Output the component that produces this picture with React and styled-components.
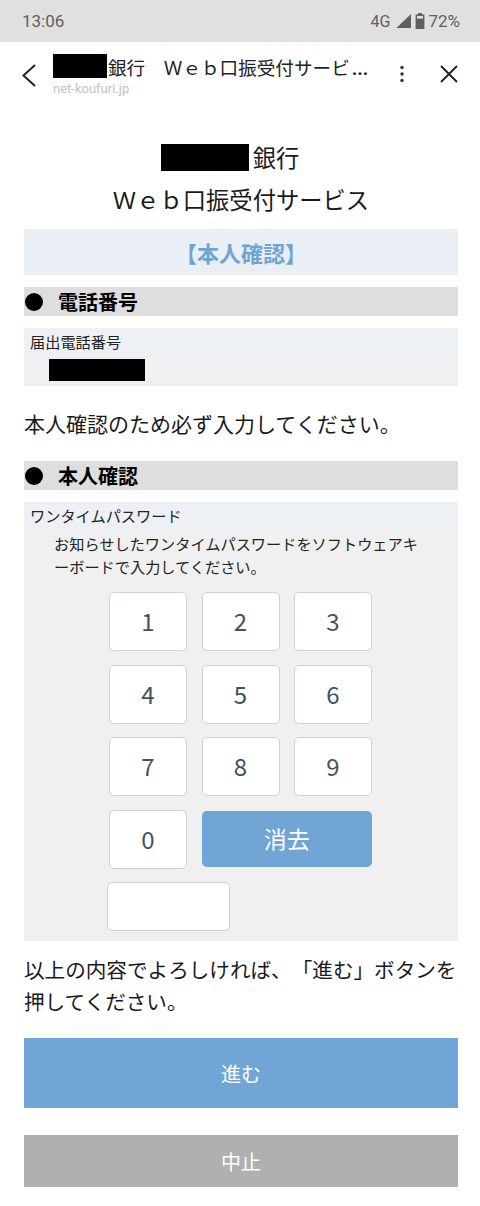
import React from 'react'
import styled, { createGlobalStyle } from 'styled-components';

const keys = ['1', '2', '3', '4', '5', '6', '7', '8', '9'];

function App() {
  return (
    <>
      <GlobalStyle />
      <Page>
        <StatusBar>
          <Time>13:06</Time>
          <StatusRight>
            <Network>4G</Network>
            <svg width="16" height="14" viewBox="0 0 16 14">
              <path d="M15 0V14H0.5Z" fill="#5f5f5f" />
            </svg>
            <svg width="10" height="16" viewBox="0 0 10 16">
              <path d="M3 0H7V1.6H9.4V16H0.6V1.6H3Z" fill="#5f5f5f" />
              <rect x="2" y="3" width="6" height="2.6" fill="#e0e0e0" />
            </svg>
            <Battery>72%</Battery>
          </StatusRight>
        </StatusBar>
        <NavBar>
          <IconSlot>
            <svg width="16" height="24" viewBox="0 0 16 24">
              <path d="M14 2L2.5 12.5L14 23" fill="none" stroke="#222" strokeWidth="2" />
            </svg>
          </IconSlot>
          <NavTitleBox>
            <NavTitle><NavBlock />銀行　Ｗｅｂ口振受付サービ<NavMore>...</NavMore></NavTitle>
            <NavUrl>net-koufuri.jp</NavUrl>
          </NavTitleBox>
          <NavDots>
            <svg width="6" height="18" viewBox="0 0 6 18">
              <circle cx="3" cy="2.5" r="1.7" fill="#333" />
              <circle cx="3" cy="9" r="1.7" fill="#333" />
              <circle cx="3" cy="15.5" r="1.7" fill="#333" />
            </svg>
          </NavDots>
          <NavClose>
            <svg width="20" height="20" viewBox="0 0 20 20">
              <path d="M2 2L18 18M18 2L2 18" fill="none" stroke="#222" strokeWidth="1.9" />
            </svg>
          </NavClose>
        </NavBar>
        <Content>
          <Heading>
            <HeadLine><HeadBlock />銀行</HeadLine>
            Ｗｅｂ口振受付サービス
          </Heading>
          <Banner>【本人確認】</Banner>
          <SectionBar><Dot />電話番号</SectionBar>
          <InfoBox>
            <InfoLabel>届出電話番号</InfoLabel>
            <InfoValue><ValueBlock /></InfoValue>
          </InfoBox>
          <Note>本人確認のため必ず入力してください。</Note>
          <SectionBar><Dot />本人確認</SectionBar>
          <Panel>
            <PanelLabel>ワンタイムパスワード</PanelLabel>
            <Hint>お知らせしたワンタイムパスワードをソフトウェアキーボードで入力してください。</Hint>
            <KeyGrid>
              {keys.map((k) => <Key key={k}>{k}</Key>)}
              <Key>0</Key>
              <ClearKey>消去</ClearKey>
            </KeyGrid>
            <CodeInput />
          </Panel>
          <Confirm>以上の内容でよろしければ、「進む」ボタンを押してください。</Confirm>
          <NextButton>進む</NextButton>
          <CancelButton>中止</CancelButton>
        </Content>
      </Page>
    </>
  );
};

export default App;

const GlobalStyle = createGlobalStyle`
html, body {
  margin: 0;
  padding: 0;
  background: #fff;
}
* {
  box-sizing: border-box;
}
body {
  font-family: "Noto Sans CJK JP", "Noto Sans", sans-serif;
  color: #111;
  text-spacing-trim: space-all;
}
`;

const Page = styled.div`
width: 480px;
height: 1206px;
overflow: hidden;
background: #fff;
`;

const StatusBar = styled.div`
height: 42px;
background: #e0e0e0;
display: flex;
align-items: center;
justify-content: space-between;
padding: 0 20px 0 22px;
font-family: Roboto, sans-serif;
color: #5f5f5f;
`;
const Time = styled.span`
font-size: 17px;
`;
const StatusRight = styled.div`
display: flex;
align-items: center;
gap: 3px;
`;
const Network = styled.span`
font-size: 16px;
margin-right: 3px;
`;
const Battery = styled.span`
font-size: 17px;
`;

const NavBar = styled.div`
height: 64px;
display: flex;
align-items: flex-start;
padding-left: 21px;
`;
const IconSlot = styled.div`
width: 32px;
padding-top: 21px;
line-height: 0;
`;
const NavTitleBox = styled.div`
width: 300px;
padding-top: 10px;
`;
const NavTitle = styled.div`
display: flex;
align-items: center;
height: 28px;
font-size: 18.6px;
white-space: nowrap;
color: #222;
`;
const NavBlock = styled.span`
display: block;
flex: none;
width: 54px;
height: 24px;
margin-right: 1px;
background: #000;
`;
const NavMore = styled.span`
font-family: Roboto, sans-serif;
font-size: 19px;
font-weight: 700;
margin: 4px 0 0 2px;
`;
const NavUrl = styled.div`
font-family: Roboto, sans-serif;
font-size: 13px;
line-height: 18px;
color: #c2c2c2;
`;
const NavDots = styled.div`
width: 52px;
padding-top: 23px;
padding-left: 46px;
line-height: 0;
`;
const NavClose = styled.div`
padding-top: 22px;
padding-left: 34px;
line-height: 0;
`;

const Content = styled.div`
padding: 30px 22px 0 24px;
`;
const Heading = styled.h1`
margin: 0 0 9px;
font-size: 23.3px;
font-weight: 400;
line-height: 42px;
text-align: center;
color: #1a1a1a;
`;
const HeadLine = styled.span`
display: block;
padding-right: 22px;
`;
const HeadBlock = styled.span`
display: inline-block;
width: 88px;
height: 27px;
margin-right: 4px;
vertical-align: -4px;
background: #000;
`;
const Banner = styled.div`
height: 46px;
margin-bottom: 12px;
background: #e9eff5;
color: #6fa5d4;
font-size: 22px;
font-weight: 700;
line-height: 46px;
text-align: center;
`;
const SectionBar = styled.div`
display: flex;
align-items: center;
height: 29px;
background: #dedede;
font-size: 20px;
font-weight: 700;
color: #000;
`;
const Dot = styled.span`
width: 18px;
height: 18px;
margin: 0 15px 0 1px;
border-radius: 50%;
background: #000;
`;
const InfoBox = styled.div`
margin-top: 12px;
`;
const InfoLabel = styled.div`
height: 30px;
padding-left: 6px;
background: #edf1f6;
font-size: 15.2px;
line-height: 27px;
color: #222;
`;
const InfoValue = styled.div`
height: 28px;
padding: 1px 0 0 25px;
background: #f0f0f0;
`;
const ValueBlock = styled.div`
width: 96px;
height: 22px;
background: #000;
`;
const Note = styled.p`
margin: 0;
height: 75px;
font-size: 21px;
line-height: 75px;
white-space: nowrap;
color: #1a1a1a;
`;
const Panel = styled.div`
margin-top: 12px;
height: 439px;
background: #f0f0f0;
`;
const PanelLabel = styled.div`
height: 27px;
padding-left: 6px;
background: #edf1f6;
font-size: 15.2px;
line-height: 27px;
color: #222;
`;
const Hint = styled.p`
margin: 3px 0 0 30px;
width: 366px;
font-size: 15.2px;
line-height: 23px;
line-break: loose;
color: #222;
`;
const KeyGrid = styled.div`
display: grid;
grid-template-columns: 78px 78px 78px;
grid-auto-rows: 59px;
column-gap: 14.5px;
row-gap: 13.5px;
margin: 14px 0 0 85px;
`;
const Key = styled.div`
display: flex;
align-items: center;
justify-content: center;
padding-bottom: 2px;
background: #fff;
border: 1px solid #ccd2d8;
border-radius: 5px;
font-size: 24px;
color: #44525f;
`;
const ClearKey = styled.div`
grid-column: span 2;
display: flex;
align-items: center;
justify-content: center;
height: 56px;
margin-top: 1px;
padding-bottom: 2px;
background: #70a5d5;
border-radius: 5px;
font-size: 23px;
color: #fff;
`;
const CodeInput = styled.div`
width: 123px;
height: 49px;
margin: 13px 0 0 83px;
background: #fff;
border: 1px solid #ccd2d8;
border-radius: 5px;
`;
const Confirm = styled.p`
margin: 12px 0 21px;
font-size: 20.6px;
line-height: 32px;
color: #1a1a1a;
`;
const NextButton = styled.div`
height: 70px;
margin-bottom: 27px;
background: #70a5d5;
color: #fff;
font-size: 20px;
line-height: 72px;
text-align: center;
`;
const CancelButton = styled.div`
height: 52px;
background: #b0b0b0;
color: #fff;
font-size: 20px;
line-height: 54px;
text-align: center;
`;
